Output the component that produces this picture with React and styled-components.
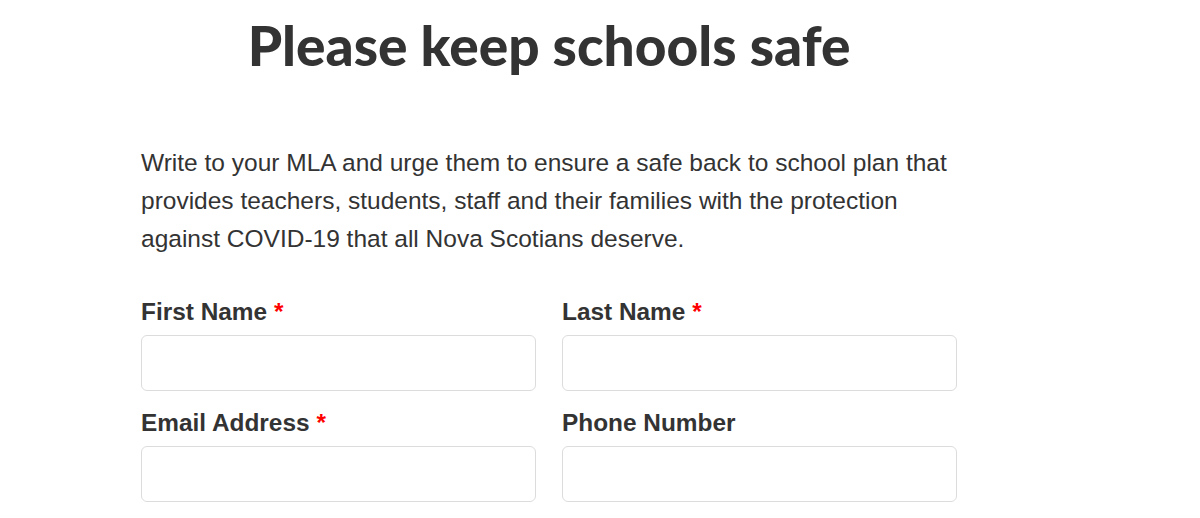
import React from "react";
import styled, { createGlobalStyle } from "styled-components";

const GlobalStyle = createGlobalStyle`
  html, body {
    margin: 0;
    padding: 0;
    background: #ffffff;
  }
  body {
    font-family: "Liberation Sans", Arial, sans-serif;
    color: #333333;
  }
`;

const Page = styled.main`
  width: 816px;
  margin: 0 auto 0 141px;
  padding-top: 12px;
`;

const Title = styled.h1`
  margin: 0;
  font-family: Lato, "Liberation Sans", sans-serif;
  font-weight: 900;
  font-size: 55px;
  line-height: 66px;
  text-align: center;
  color: #333333;
`;

const Intro = styled.p`
  margin: 66px 0 40px;
  font-size: 24.5px;
  line-height: 38px;
  color: #333333;
`;

const FieldGrid = styled.div`
  display: grid;
  grid-template-columns: 395px 395px;
  column-gap: 26px;
  row-gap: 18px;
`;

const Field = styled.div`
  display: flex;
  flex-direction: column;
`;

const Label = styled.label`
  font-weight: 700;
  font-size: 24.4px;
  line-height: 28px;
  margin-bottom: 9px;
  color: #333333;
`;

const Required = styled.span`
  color: #ff0000;
  margin-left: 7px;
`;

const Input = styled.input`
  box-sizing: border-box;
  height: 56px;
  width: 100%;
  border: 1px solid #dcdcdc;
  border-radius: 6px;
  background: #ffffff;
  font-size: 20px;
  padding: 0 14px;
  outline: none;
`;

const fields = [
  { id: "first", label: "First Name", required: true },
  { id: "last", label: "Last Name", required: true },
  { id: "email", label: "Email Address", required: true },
  { id: "phone", label: "Phone Number", required: false },
];

export default function App() {
  return (
    <>
      <GlobalStyle />
      <Page>
        <Title>Please keep schools safe</Title>
        <Intro>
          Write to your MLA and urge them to ensure a safe back to school plan that
          provides teachers, students, staff and their families with the protection
          against COVID-19 that all Nova Scotians deserve.
        </Intro>
        <FieldGrid>
          {fields.map((f) => (
            <Field key={f.id}>
              <Label htmlFor={f.id}>
                {f.label}
                {f.required && <Required>*</Required>}
              </Label>
              <Input id={f.id} type="text" />
            </Field>
          ))}
        </FieldGrid>
      </Page>
    </>
  );
}
